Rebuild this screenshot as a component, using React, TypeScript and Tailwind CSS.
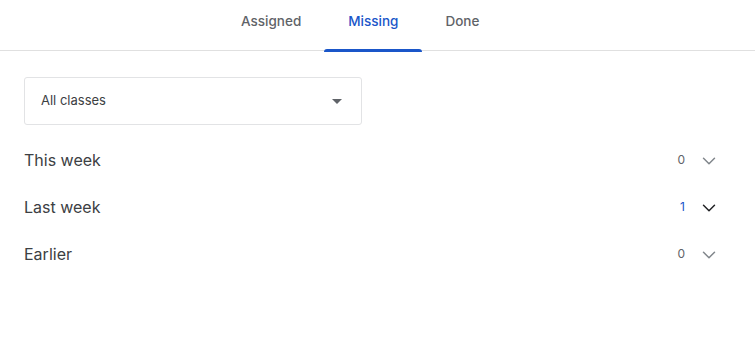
import { ChevronDown } from "lucide-react";

const tabs = ["Assigned", "Missing", "Done"];

const groups = [
  { label: "This week", count: 0 },
  { label: "Last week", count: 1 },
  { label: "Earlier", count: 0 },
];

export default function App() {
  return (
    <div className="h-[345px] w-[755px] bg-white font-['Inter','Roboto',sans-serif] text-[#3c4043]">
      {/* tab bar */}
      <div className="flex h-[51px] border-b border-[#e0e0e0] pl-[218px]">
        {tabs.map((t) => {
          const active = t === "Missing";
          return (
            <div
              key={t}
              className={`relative flex h-[51px] items-start pt-[11px] text-[13.5px] font-medium ${
                active ? "px-[24px] text-[#1a56c9]" : "px-[23px] text-[#5f6368]"
              }`}
            >
              {t}
              {active && (
                <span className="absolute bottom-[-1px] left-0 right-0 h-[3px] rounded-t-[3px] bg-[#1a56c9]" />
              )}
            </div>
          );
        })}
      </div>

      <div className="px-6 pt-[26px]">
        {/* class filter */}
        <div className="flex h-[48px] w-[338px] items-center justify-between rounded-[3px] border border-[#e2e3e5] pl-4 pr-[19px] text-[13px] text-[#3c4043]">
          <span>All classes</span>
          <svg width="10" height="5" viewBox="0 0 10 5">
            <path d="M0 0h10L5 5z" fill="#5f6368" />
          </svg>
        </div>

        {/* groups */}
        <div className="mt-3 pr-[11px]">
          {groups.map((g) => (
            <div key={g.label} className="flex h-[47px] items-center justify-between">
              <span className="-mt-[2px] text-[16px] text-[#3c4043]">{g.label}</span>
              <div className="flex items-center gap-[13px]">
                <span className={`-mt-[2px] text-[12px] ${g.count ? "text-[#1a56c9]" : "text-[#5f6368]"}`}>{g.count}</span>
                <ChevronDown
                  size={22}
                  strokeWidth={1.6}
                  className={g.count ? "text-[#202124]" : "text-[#80868b]"}
                />
              </div>
            </div>
          ))}
        </div>
      </div>
    </div>
  );
}
